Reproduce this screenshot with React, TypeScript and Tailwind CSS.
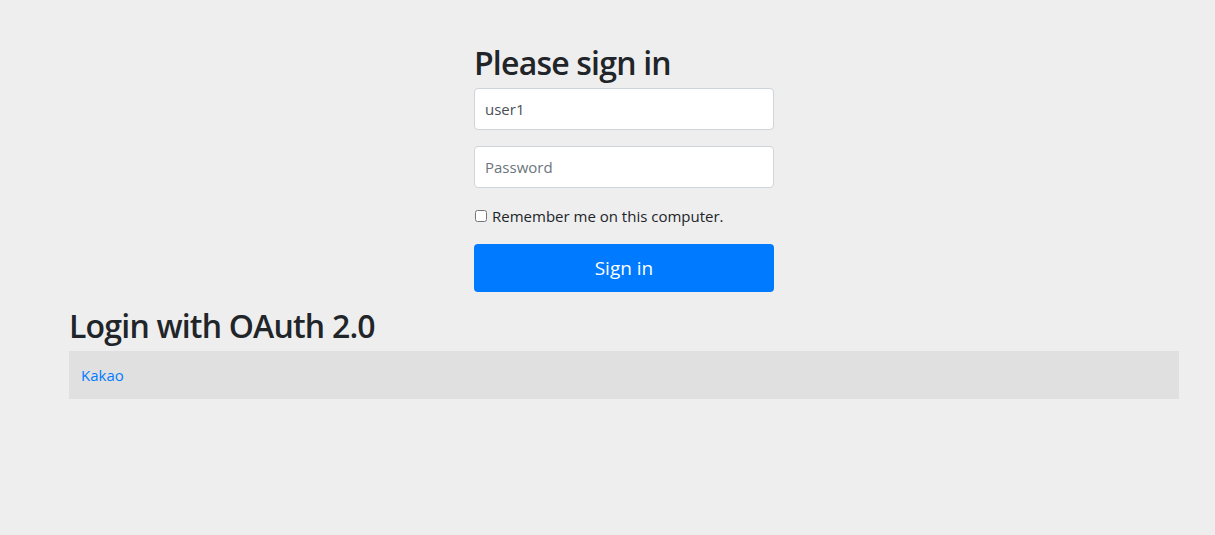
import React from 'react';

const font = { fontFamily: '"Open Sans", "Noto Sans", sans-serif' };

const App: React.FC = () => {
  return (
    <div className="min-h-screen bg-[#eeeeee] text-[#212529]" style={font}>
      <div className="ml-[54px] w-[1140px] px-[15px]">
        <form className="mx-auto w-[330px] px-[15px] pt-[44px]" onSubmit={(e) => e.preventDefault()}>
          <h2 className="mb-[6px] text-[32px] font-semibold leading-[38px] tracking-[-0.8px]">Please sign in</h2>
          <input
            type="text"
            defaultValue="user1"
            className="block h-[42px] w-full rounded-[4px] border border-[#ced4da] bg-white px-[10px] text-[15px] text-[#495057] outline-none"
          />
          <input
            type="password"
            placeholder="Password"
            className="mt-[16px] block h-[42px] w-full rounded-[4px] border border-[#ced4da] bg-white px-[10px] text-[15px] text-[#495057] outline-none placeholder:text-[#6c757d]"
          />
          <label className="mt-[17px] flex items-center text-[15px] leading-[22px]">
            <input type="checkbox" className="ml-[1px] mr-[5px] h-[12px] w-[12px]" />
            <span>Remember me on this computer.</span>
          </label>
          <button
            type="submit"
            className="mt-[17px] block h-[48px] w-full rounded-[4px] bg-[#007bff] text-[19px] text-white"
          >
            Sign in
          </button>
        </form>
        <h2 className="mt-[15px] mb-[6px] text-[32px] font-semibold leading-[38px] tracking-[-0.8px]">Login with OAuth 2.0</h2>
        <table className="w-full">
          <tbody>
            <tr className="bg-[#e0e0e0]">
              <td className="h-[48px] px-[12px] text-[15px]">
                <a href="#" className="text-[#007bff]">Kakao</a>
              </td>
            </tr>
          </tbody>
        </table>
      </div>
    </div>
  );
};

export default App;
